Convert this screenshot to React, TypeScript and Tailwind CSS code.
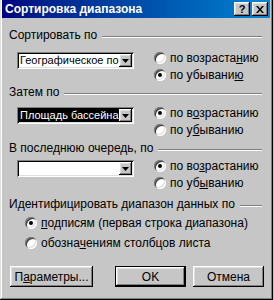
import * as React from "react";

const raised =
  "shadow-[inset_-1px_-1px_#000000,inset_1px_1px_#ffffff,inset_-2px_-2px_#808080,inset_2px_2px_#dfdfdf]";
const sunken =
  "shadow-[inset_1px_1px_#808080,inset_-1px_-1px_#ffffff,inset_2px_2px_#000000,inset_-2px_-2px_#dfdfdf]";

function GroupHeader({ label, className }: { label: string; className?: string }) {
  return (
    <div className={"flex items-center h-[12px] pl-[7px] pr-[8px] " + (className ?? "")}>
      <span className="whitespace-nowrap leading-[12px]">{label}</span>
      <div className="flex-1 ml-[5px] mt-[3px] h-[2px] border-t border-t-[#808080] border-b border-b-white" />
    </div>
  );
}

function Arrow() {
  return (
    <svg width="7" height="4" viewBox="0 0 7 4">
      <path d="M0 0h7L3.5 4z" fill="#000" />
    </svg>
  );
}

function Combo({ text, selected }: { text?: string; selected?: boolean }) {
  return (
    <div className={"flex w-[117px] h-[17px] bg-white p-[2px] " + sunken}>
      <div className="flex-1 overflow-hidden whitespace-nowrap leading-[13px] text-[11px]">
        {text && (
          <span
            className={
              "block h-full pl-[1px] " + (selected ? "bg-black text-white" : "text-black")
            }
          >
            {text}
          </span>
        )}
      </div>
      <div className={"w-[13px] h-[13px] bg-[#c6c6c6] flex items-center justify-center " + raised}>
        <Arrow />
      </div>
    </div>
  );
}

function Radio({
  checked,
  children,
  className,
}: {
  checked?: boolean;
  children: React.ReactNode;
  className?: string;
}) {
  return (
    <div className={"flex items-center whitespace-nowrap " + (className ?? "h-[17px]")}>
      <div
        className={
          "relative w-[12px] h-[12px] rounded-full bg-white mr-[4px] shadow-[inset_1px_1px_#808080,inset_-1px_-1px_#ffffff,inset_2px_2px_#404040,inset_-2px_-2px_#dfdfdf]"
        }
      >
        {checked && (
          <div className="absolute left-[4px] top-[4px] w-[4px] h-[4px] rounded-full bg-black" />
        )}
      </div>
      <span className="leading-[12px]">{children}</span>
    </div>
  );
}

function Btn({
  children,
  primary,
  className,
}: {
  children: React.ReactNode;
  primary?: boolean;
  className?: string;
}) {
  return (
    <div className={"h-[21px] " + (primary ? "border border-black " : "") + (className ?? "")}>
      <div className={"w-full h-full flex items-center justify-center bg-[#c6c6c6] " + raised}>
        {children}
      </div>
    </div>
  );
}

export default function App() {
  return (
    <div className="w-[274px] h-[300px] bg-[#c6c6c6] font-['Liberation_Sans',Arial,sans-serif] text-[12px] text-black">
      <div className="w-[273px] h-[300px] pl-[2px] pr-[3px] bg-[#c6c6c6] shadow-[inset_-1px_-1px_#000000,inset_1px_0_#dfdfdf,inset_-2px_-2px_#808080,inset_2px_0_#ffffff] flex flex-col">
        {/* title bar */}
        <div className="h-[18px] flex items-center pl-[3px] pr-[2px] bg-gradient-to-r from-[#000080] to-[#1084d0]">
          <span className="flex-1 text-white font-bold text-[12px] leading-[14px] whitespace-nowrap">
            Сортировка диапазона
          </span>
          <div className={"w-[16px] h-[14px] bg-[#c6c6c6] flex items-center justify-center font-bold text-[11px] leading-none " + raised}>
            ?
          </div>
          <div className={"ml-[2px] w-[16px] h-[14px] bg-[#c6c6c6] flex items-center justify-center " + raised}>
            <svg width="8" height="7" viewBox="0 0 8 7">
              <path d="M0 0h2l2 2.5L6 0h2L5 3.5 8 7H6L4 4.5 2 7H0l3-3.5z" fill="#000" />
            </svg>
          </div>
        </div>

        {/* Сортировать по */}
        <GroupHeader label="Сортировать по" className="mt-[11px]" />
        <div className="flex mt-[8px]">
          <div className="ml-[15px] mt-[3px]">
            <Combo text="Географическое по" />
          </div>
          <div className="ml-[20px] flex flex-col">
            <Radio>
              по возраста<u>н</u>ию
            </Radio>
            <Radio checked>
              по убывани<u>ю</u>
            </Radio>
          </div>
        </div>

        {/* Затем по */}
        <GroupHeader label="Затем по" className="mt-[3px]" />
        <div className="flex mt-[6px]">
          <div className="ml-[15px] mt-[3px]">
            <Combo text="Площадь бассейна" selected />
          </div>
          <div className="ml-[20px] flex flex-col">
            <Radio checked>
              по в<u>о</u>зрастанию
            </Radio>
            <Radio>
              по у<u>б</u>ыванию
            </Radio>
          </div>
        </div>

        {/* В последнюю очередь, по */}
        <GroupHeader label="В последнюю очередь, по" className="mt-[4px]" />
        <div className="flex mt-[3px]">
          <div className="ml-[15px] mt-[3px]">
            <Combo />
          </div>
          <div className="ml-[20px] flex flex-col">
            <Radio checked>
              по во<u>з</u>растанию
            </Radio>
            <Radio>
              по уб<u>ы</u>ванию
            </Radio>
          </div>
        </div>

        {/* Идентифицировать */}
        <GroupHeader label="Идентифицировать диапазон данных по" className="mt-[7px]" />
        <div className="flex flex-col mt-[3px] ml-[23px]">
          <Radio checked className="h-[20px]">
            <u>п</u>одписям (первая строка диапазона)
          </Radio>
          <Radio className="h-[20px]">
            обозна<u>ч</u>ениям столбцов листа
          </Radio>
        </div>

        {/* buttons */}
        <div className="flex mt-[13px]">
          <Btn className="ml-[8px] w-[83px]">
            П<u>а</u>раметры...
          </Btn>
          <Btn primary className="ml-[22px] w-[71px]">
            OK
          </Btn>
          <Btn className="ml-[7px] w-[71px]">Отмена</Btn>
        </div>
      </div>
    </div>
  );
}
